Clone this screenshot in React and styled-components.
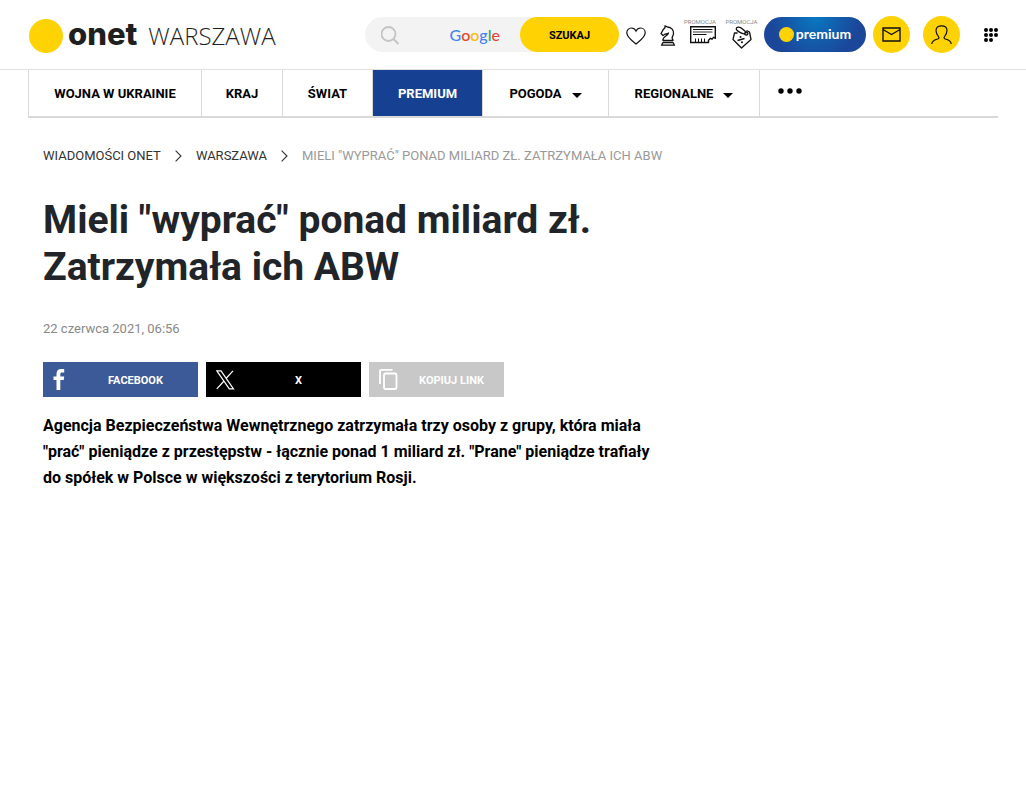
import styled, { createGlobalStyle } from "styled-components";

const menu = [
  { label: "WOJNA W UKRAINIE", width: 173 },
  { label: "KRAJ", width: 81 },
  { label: "ŚWIAT", width: 90 },
  { label: "PREMIUM", width: 110, active: true },
  { label: "POGODA", width: 126, more: true },
  { label: "REGIONALNE", width: 151, more: true },
];

const App = () => (
  <>
    <GlobalStyle />
    <Header>
      <HeaderInner>
        <Logo href="#">
          <Sun $size={34} />
          <Brand>onet</Brand>
          <City>WARSZAWA</City>
        </Logo>
        <Tools>
          <Search onSubmit={(e) => e.preventDefault()}>
            <SearchIcon />
            <SearchInput type="search" aria-label="Szukaj" />
            <Google>
              <i>G</i><i>o</i><i>o</i><i>g</i><i>l</i><i>e</i>
            </Google>
            <SearchButton>SZUKAJ</SearchButton>
          </Search>
          <Services>
            <Service href="#" aria-label="Sympatia">
              <HeartIcon />
            </Service>
            <Service href="#" aria-label="Gry">
              <KnightIcon />
            </Service>
          </Services>
          <Promos>
            <Promo href="#" aria-label="Kupony" $align="flex-end">
              <span>PROMOCJA</span>
              <CouponIcon />
            </Promo>
            <Promo href="#" aria-label="Rabaty" $align="center">
              <span>PROMOCJA</span>
              <TagIcon />
            </Promo>
          </Promos>
          <Premium href="#">
            <Sun $size={15} />
            premium
          </Premium>
          <Round href="#" aria-label="Poczta">
            <MailIcon />
          </Round>
          <Account href="#" aria-label="Konto">
            <UserIcon />
          </Account>
          <Grid aria-label="Serwisy">
            <GridIcon />
          </Grid>
        </Tools>
      </HeaderInner>
    </Header>

    <Nav>
      {menu.map((item) => (
        <NavItem key={item.label} href="#" $width={item.width} $active={item.active}>
          {item.label}
          {item.more && <Caret viewBox="0 0 10 5"><path d="M0 0h10L5 5z" /></Caret>}
        </NavItem>
      ))}
      <More aria-label="Więcej">
        <svg width="24" height="6" viewBox="0 0 24 6">
          <circle cx="3" cy="3" r="2.7" />
          <circle cx="12" cy="3" r="2.7" />
          <circle cx="21" cy="3" r="2.7" />
        </svg>
      </More>
    </Nav>

    <Article>
      <Breadcrumbs>
        <a href="#">WIADOMOŚCI ONET</a>
        <Chevron />
        <a href="#">WARSZAWA</a>
        <Chevron />
        <span>MIELI "WYPRAĆ" PONAD MILIARD ZŁ. ZATRZYMAŁA ICH ABW</span>
      </Breadcrumbs>
      <Title>Mieli "wyprać" ponad miliard zł. Zatrzymała ich ABW</Title>
      <Published>22 czerwca 2021, 06:56</Published>
      <Share>
        <ShareButton $color="#3d5a98" $width={155}>
          <FacebookIcon />
          <span>FACEBOOK</span>
        </ShareButton>
        <ShareButton $color="#000" $width={155}>
          <XIcon />
          <span>X</span>
        </ShareButton>
        <ShareButton $color="#c8c8c8" $width={135}>
          <CopyIcon />
          <span>KOPIUJ LINK</span>
        </ShareButton>
      </Share>
      <Lead>
        Agencja Bezpieczeństwa Wewnętrznego zatrzymała trzy osoby z grupy, która miała
        "prać" pieniądze z przestępstw - łącznie ponad 1 miliard zł. "Prane" pieniądze
        trafiały do spółek w Polsce w większości z terytorium Rosji.
      </Lead>
    </Article>
  </>
);

const SearchIcon = () => (
  <svg width="20" height="20" viewBox="0 0 20 20" fill="none" stroke="#c4c4c4" strokeWidth="1.8">
    <circle cx="7.5" cy="9" r="7" />
    <path d="M12.5 14l5 5" />
  </svg>
);

const HeartIcon = () => (
  <svg width="20" height="18" viewBox="0 0 20 18" fill="none" stroke="#111" strokeWidth="1.2">
    <path d="M10 17C7 14.5 .8 10.5 .8 5.8 .8 3 2.9 1 5.3 1 7.5 1 9.2 2.2 10 4c.8-1.8 2.5-3 4.7-3 2.4 0 4.500 2 4.500 4.800C19.200 10.500 13 14.500 10 17z" />
  </svg>
);

const KnightIcon = () => (
  <svg width="16" height="21" viewBox="0 0 16 21" fill="none" stroke="#111" strokeWidth="1.3" strokeLinejoin="round">
    <path d="M3 15.5C2 11.5 7.5 11.500 8.500 8 7 9 5.500 8.700 4.500 9.500L3 10.500 1 8.500 3.500 4.200 5 2.800V.8L7.500 2C11.500 2.200 14 5 13.500 9c-.3 2-1.800 3-1.300 4.500.2.700.8 1 .8 2z" />
    <path d="M3 17.500h10l1.500 2.700h-13z" />
  </svg>
);

const CouponIcon = () => (
  <svg width="26" height="18" viewBox="0 0 26 18" fill="none" stroke="#111">
    <path d="M18.500 16.500H.7V.7h24.600v11.500l-1.800-.8-1.500 1.800-1.700-.8-1.800 1.800z" strokeWidth="1.400" />
    <path d="M3 3.500h19.500M3 8.500h13.500" />
    <path d="M3 6h19.500" stroke="#999" strokeWidth="2" />
    <path d="M5.500 16v-3.500M8.500 16v-3.500M11.500 16v-3.500M14.500 16v-3.500" />
  </svg>
);

const TagIcon = () => (
  <svg width="20" height="23" viewBox="0 0 20 23" fill="none" stroke="#111" strokeWidth="1.3" strokeLinejoin="round">
    <path d="M5.500 7H2.500L1 13.500 9.500 22l9.500-8.500-1.500-7.500-3-1.500" />
    <path d="M14.500 8C11 8.500 4 5 4.300 2.500 4.500 .5 8 .5 10.500 3l4 3.500M6 5.500l4 2" />
    <circle cx="14.300" cy="7.600" r="1.600" />
    <path d="M5.500 14.500l7-2" strokeWidth="1.400" />
    <circle cx="8.500" cy="11" r="1" fill="#111" stroke="none" />
    <circle cx="10" cy="16.200" r="1" fill="#111" stroke="none" />
  </svg>
);

const MailIcon = () => (
  <svg width="19" height="15" viewBox="0 0 19 15" fill="none" stroke="#111" strokeWidth="1.4">
    <path d="M1 1h17v13H1zM1 2.500l8.500 5 8.500-5" />
  </svg>
);

const UserIcon = () => (
  <svg width="21" height="20" viewBox="0 0 21 20" fill="none" stroke="#111" strokeWidth="1.2">
    <path d="M.7 19c.5-3 3-4.300 6-5 1.500-.5 1.500-1.500.7-2.500C5.800 9.500 5 7.500 5 5.500 5 2.500 7.200.8 10.500.8S16 2.500 16 5.500c0 2-.8 4-2.400 6-.8 1-.8 2 .7 2.500 3 .7 5.500 2 6 5" />
  </svg>
);

const GridIcon = () => (
  <svg width="14" height="14" viewBox="0 0 14 14">
    {[2, 7, 12].map((y) =>
      [2, 7, 12].map((x) => x + y < 24 && <circle key={`${x}-${y}`} cx={x} cy={y} r="2" />)
    )}
  </svg>
);

const Chevron = () => (
  <svg width="7" height="12" viewBox="0 0 7 12" fill="none" stroke="#333" strokeWidth="1.1">
    <path d="M.6.6L6 6 .6 11.400" />
  </svg>
);

const FacebookIcon = () => (
  <svg width="20" height="22" viewBox="0 0 20 22" fill="#fff">
    <path d="M3.500 21v-10H.5V7.500h3V5C3.500 1.800 5.200 0 8.200 0h3v3.600H9.300C7.800 3.600 7.300 4.200 7.300 5.500v2h3.900l-.5 3.500H7.300v10z" />
  </svg>
);

const XIcon = () => (
  <svg width="20" height="20" viewBox="0 0 20 20" fill="none" stroke="#fff" strokeWidth="1.2">
    <path d="M.8.8h4.200l12.500 18h-4.200zM17 .8l-7 7.700M8 11L.8 18.800" />
  </svg>
);

const CopyIcon = () => (
  <svg width="20" height="22" viewBox="0 0 20 22" fill="none" stroke="#fff" strokeWidth="1.8">
    <path d="M1 15V2C1 1.200 1.500 .9 2.500 .9H13.500" />
    <rect x="5" y="4.500" width="12.500" height="15.500" rx="1.500" />
  </svg>
);

const GlobalStyle = createGlobalStyle`
  * {
    box-sizing: border-box;
  }

  body {
    margin: 0;
    background: #fff;
    color: #000;
    font-family: Roboto, sans-serif;
  }

  a {
    color: inherit;
    text-decoration: none;
  }

  button {
    padding: 0;
    border: 0;
    font-family: inherit;
    cursor: pointer;
  }

  svg {
    display: block;
    flex: none;
  }
`;
const Header = styled.header`
  border-bottom: 1px solid #e0e0e0;
`;
const HeaderInner = styled.div`
  height: 69px;
  margin: 0 28px;
  display: flex;
  align-items: center;
  justify-content: space-between;
`;
const Logo = styled.a`
  display: flex;
  align-items: center;
  padding: 2px 0 0 1px;
  color: #1f1f1f;
`;
const Sun = styled.span`
  width: ${(props) => props.$size}px;
  height: ${(props) => props.$size}px;
  flex: none;
  border-radius: 50%;
  background: #ffd203;
`;
const Brand = styled.span`
  margin-left: 5px;
  padding-bottom: 4px;
  font: 800 31px/30px Inter, sans-serif;
`;
const City = styled.span`
  margin-left: 11px;
  font: 300 24px/34px "Open Sans", sans-serif;
`;
const Tools = styled.div`
  display: flex;
  align-items: center;
`;
const Search = styled.form`
  width: 254px;
  height: 35px;
  display: flex;
  align-items: center;
  padding-left: 16px;
  border-radius: 18px;
  background: #f3f3f3;
`;
const SearchInput = styled.input`
  flex: 1;
  min-width: 0;
  height: 100%;
  border: 0;
  outline: 0;
  background: none;
`;
const Google = styled.span`
  margin-right: 20px;
  font: 500 16px/20px Lato, sans-serif;

  i {
    font-style: normal;
    color: #4285f4;
  }

  i:nth-child(2),
  i:nth-child(6) {
    color: #ea4335;
  }

  i:nth-child(3) {
    color: #fbbc05;
  }

  i:nth-child(5) {
    color: #34a853;
  }
`;
const SearchButton = styled.button`
  width: 99px;
  height: 35px;
  padding-top: 2px;
  border-radius: 18px;
  background: #ffd203;
  font-size: 11px;
  font-weight: 700;
`;
const Services = styled.div`
  display: flex;
  align-items: center;
  gap: 14px;
  padding-top: 2px;
  margin: 0 7px;
`;
const Service = styled.a`
  display: block;
`;
const Promos = styled.div`
  display: flex;
  gap: 9px;
  margin-right: 6px;
`;
const Promo = styled.a`
  width: 33px;
  height: 35px;
  display: flex;
  flex-direction: column;
  align-items: ${(props) => props.$align};

  span {
    font-size: 6px;
    line-height: 9px;
    color: #888;
  }
`;
const Premium = styled.a`
  width: 102px;
  height: 35px;
  display: flex;
  align-items: center;
  justify-content: center;
  gap: 2px;
  padding-bottom: 1px;
  border-radius: 18px;
  background: radial-gradient(circle at 50% 0, #0878c0, #1b479b 70%);
  color: #fff;
  font: 700 14px/20px Lato, sans-serif;
`;
const Round = styled.a`
  width: 37px;
  height: 37px;
  display: flex;
  align-items: center;
  justify-content: center;
  margin-left: 7px;
  border-radius: 50%;
  background: #ffd203;
`;
const Account = styled(Round)`
  margin-left: 13px;
`;
const Grid = styled.button`
  margin-left: 24px;
  background: none;
`;
const Nav = styled.nav`
  height: 48px;
  display: flex;
  margin: 0 28px;
  border-left: 1px solid #d9d9d9;
  border-bottom: 2px solid #d9d9d9;
`;
const NavItem = styled.a`
  width: ${(props) => props.$width}px;
  display: flex;
  align-items: center;
  justify-content: center;
  border-right: 1px solid #d9d9d9;
  background: ${(props) => (props.$active ? "#164193" : "#fff")};
  color: ${(props) => (props.$active ? "#fff" : "#000")};
  font-size: 13px;
  font-weight: 700;
`;
const Caret = styled.svg`
  width: 10px;
  height: 5px;
  margin: 4px 0 0 10px;
`;
const More = styled.button`
  padding: 0 18px 4px;
  background: none;
`;
const Article = styled.article`
  max-width: 700px;
  margin: 0 28px;
  padding: 27px 15px;
`;
const Breadcrumbs = styled.nav`
  display: flex;
  align-items: center;
  gap: 14px;
  font-size: 13px;
  line-height: 22px;
  color: #333;
  white-space: nowrap;

  span {
    color: #999;
  }
`;
const Title = styled.h1`
  max-width: 625px;
  margin: 30px 0 28px;
  font-size: 39px;
  font-weight: 700;
  line-height: 47px;
  color: #212529;
`;
const Published = styled.time`
  display: block;
  font-size: 13px;
  line-height: 20px;
  color: #888;
`;
const Share = styled.div`
  display: flex;
  gap: 8px;
  margin: 23px 0 16px;
`;
const ShareButton = styled.button`
  width: ${(props) => props.$width}px;
  height: 35px;
  display: flex;
  align-items: center;
  padding-left: 10px;
  background: ${(props) => props.$color};
  color: #fff;
  font-size: 11px;
  font-weight: 700;

  span {
    flex: 1;
    padding-top: 2px;
  }
`;
const Lead = styled.p`
  max-width: 625px;
  margin: 0;
  font-size: 16px;
  font-weight: 700;
  line-height: 26px;
`;

export default App;
